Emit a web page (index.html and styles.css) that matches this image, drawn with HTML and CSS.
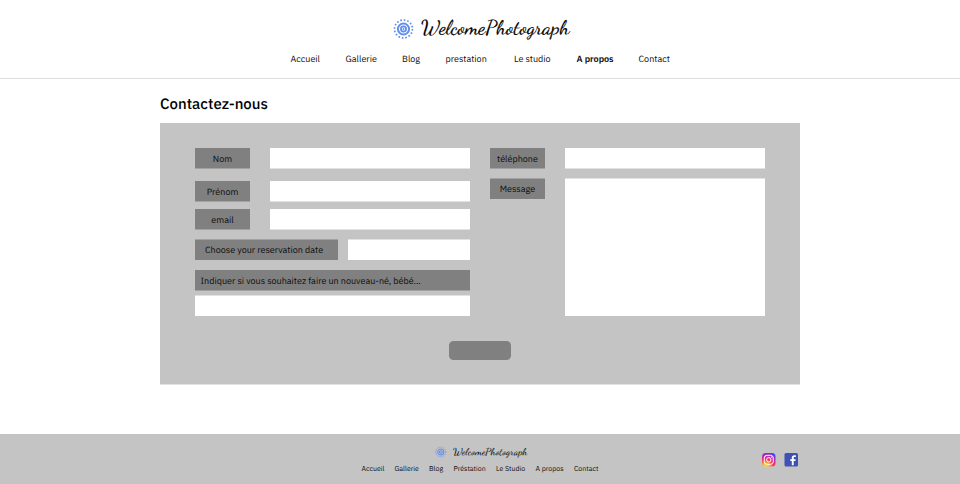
FILE: index.html
```html
<!DOCTYPE html>
<html lang="fr">
<head>
<meta charset="utf-8">
<title>WelcomePhotograph</title>
<link rel="stylesheet" href="styles.css">
</head>
<body>
<header class="header">
  <a class="brand">
    <svg class="brand-icon" viewBox="0 0 22 22"><g id="sun" fill="none" stroke="#638fec"><circle cx="11" cy="11" r="9.4" stroke-width="1.8" stroke-dasharray="1.69 2"/><circle cx="11" cy="11" r="5.8" stroke-width="2.1"/><circle cx="11" cy="11" r="2.7" stroke-width="1.9"/><circle cx="11" cy="11" r="1" fill="#638fec" stroke="none"/></g></svg>
    <svg class="brand-name" viewBox="0 0 153 32"><text x="2" y="16" textLength="148.5" lengthAdjust="spacingAndGlyphs">WelcomePhotograph</text></svg>
  </a>
  <nav class="nav">
    <a>Accueil</a><a>Gallerie</a><a>Blog</a><a>prestation</a><a>Le studio</a><a class="active">A propos</a><a>Contact</a>
  </nav>
</header>
<main class="main">
  <h1 class="title">Contactez-nous</h1>
  <form class="panel">
    <div class="columns">
      <div class="left">
        <div class="row"><label class="label">Nom</label><span class="field"></span></div>
        <div class="row row-prenom"><label class="label">Prénom</label><span class="field"></span></div>
        <div class="row row-email"><label class="label">email</label><span class="field"></span></div>
        <div class="row row-date"><label class="label label-date soft-top"><span>Choose your reservation date</span></label><span class="field soft-top"></span></div>
        <label class="label label-wide"><span>Indiquer si vous souhaitez faire un nouveau-né, bébé...</span></label>
        <div class="field field-wide soft-top"></div>
      </div>
      <div class="right">
        <div class="row"><label class="label">téléphone</label><span class="field"></span></div>
        <div class="row row-message"><label class="label soft-top">Message</label><span class="field area soft-top"></span></div>
      </div>
    </div>
    <div class="submit"></div>
  </form>
</main>
<footer class="footer">
  <div class="footer-center">
    <a class="footer-brand">
      <svg class="footer-icon" viewBox="0 0 22 22"><use href="#sun"/></svg>
      <svg class="footer-name" viewBox="0 0 76 16"><text x="0" y="8" textLength="74.5" lengthAdjust="spacingAndGlyphs">WelcomePhotograph</text></svg>
    </a>
    <nav class="footer-nav">
      <a>Accueil</a><a>Gallerie</a><a>Blog</a><a>Préstation</a><a>Le Studio</a><a>A propos</a><a>Contact</a>
    </nav>
  </div>
  <div class="social">
    <svg viewBox="0 0 14 14"><defs><radialGradient id="ig" cx=".28" cy="1.05" r="1.1"><stop offset="0" stop-color="#ffe52e"/><stop offset=".25" stop-color="#ffb52b"/><stop offset=".52" stop-color="#fb3657"/><stop offset=".75" stop-color="#ce28b5"/><stop offset="1" stop-color="#4444ef"/></radialGradient></defs><rect width="13.5" height="13.5" rx="3.5" fill="url(#ig)"/><g fill="none" stroke="#fff" stroke-width="1"><rect x="2.3" y="2.3" width="9" height="9" rx="2.8"/><circle cx="6.8" cy="6.8" r="2.2"/></g><circle cx="9.5" cy="4.1" r=".6" fill="#fff"/></svg>
    <svg viewBox="0 0 14 14"><rect x=".5" width="13.5" height="13.5" rx="1.6" fill="#3f51b5"/><path d="M7.8 12.3V8H6.3V6.3h1.5V5c0-1.8 1-2.7 2.6-2.7h1.4V4h-1c-.8 0-1.1.3-1.1 1v1.3h2L11.4 8H9.7v4.3z" fill="#fff"/></svg>
  </div>
</footer>
</body>
</html>
```
FILE: styles.css
```css
* { box-sizing: border-box; }
body {
  margin: 0;
  background: #fff;
  color: #0c0c0c;
  font-family: "IBM Plex Sans", "Noto Sans", sans-serif;
  font-size: 9px;
  text-rendering: geometricPrecision;
}
svg { display: block; }
.header {
  height: 79px;
  padding-top: 18px;
  border-bottom: 1px solid #dedede;
}
.brand { display: flex; width: 180px; height: 32px; margin-left: 393px; }
.brand-icon { width: 21px; height: 22px; margin-right: 5px; flex: none; }
.brand-name { width: 153px; height: 32px; flex: none; overflow: visible; }
.brand-name text, .footer-name text {
  font-family: "Dancing Script", "Liberation Serif", cursive;
  font-size: 20px;
  fill: #000;
  stroke: #000;
  stroke-width: 0.15px;
}
.footer-name text { font-size: 10px; stroke: none; }
.nav {
  display: grid;
  grid-template-columns: 55px 56.5px 43.5px 68.5px 62.5px 62px 34px;
  margin-left: 290.5px;
  margin-top: 2px;
  line-height: 16px;
  white-space: nowrap;
}
.active { font-weight: 600; }
.main { width: 640px; height: 355px; margin: 0 auto; padding-top: 16px; }
.title { margin: 0 0 8px; font-size: 15px; line-height: 20px; font-weight: 500; color: #000; white-space: nowrap; }
.panel { height: 262px; padding: 25px 35px 0; background: #c4c4c4; border-bottom: 1px solid #e2e2e2; }
.columns { display: flex; gap: 20px; }
.left, .right { width: 275px; }
.row { display: flex; gap: 20px; }
.label {
  display: flex;
  align-items: center;
  justify-content: center;
  width: 55px;
  height: 21px;
  padding-top: 2px;
  background: #808080;
  border-bottom: 1px solid #a2a2a2;
  white-space: nowrap;
}
.field { width: 200px; height: 21px; background: #fff; border-bottom: 1px solid #e2e2e2; }
.soft-top { border-bottom: 0; border-top: 1px solid #e2e2e2; }
.label.soft-top { border-top-color: #a2a2a2; padding-top: 0; }
.row-prenom { margin-top: 12px; }
.row-email { margin-top: 7px; }
.row-date { margin-top: 9px; gap: 10px; }
.label-date { width: 143px; justify-content: flex-start; padding-left: 10px; }
.row-date .field { width: 122px; }
.label-wide { width: 275px; margin-top: 10px; justify-content: flex-start; padding-left: 5.5px; }
.field-wide { width: 275px; margin-top: 4px; }
.row-message { margin-top: 9px; }
.area { height: 138px; }
.submit { width: 61.5px; height: 18.5px; margin: 25px 0 0 254px; border-radius: 4.5px; background: #808080; }
.footer { display: flex; justify-content: space-between; height: 50px; background: #c4c4c4; }
.footer-center { margin-left: 361.5px; }
.footer-brand { display: flex; height: 28px; padding-top: 12px; margin-left: 73.5px; }
.footer-icon { width: 11.5px; height: 12px; margin-right: 6px; }
.footer-name { width: 76px; height: 16px; margin-top: 1px; overflow: visible; }
.footer-nav {
  display: grid;
  grid-template-columns: 33px 34.5px 24.5px 42.5px 39.5px 38.5px 26px;
  font-size: 7px;
  line-height: 14px;
  white-space: nowrap;
}
.social { display: flex; gap: 8px; margin: 19px 162px 0 0; }
.social svg { width: 14px; height: 14px; }
```
